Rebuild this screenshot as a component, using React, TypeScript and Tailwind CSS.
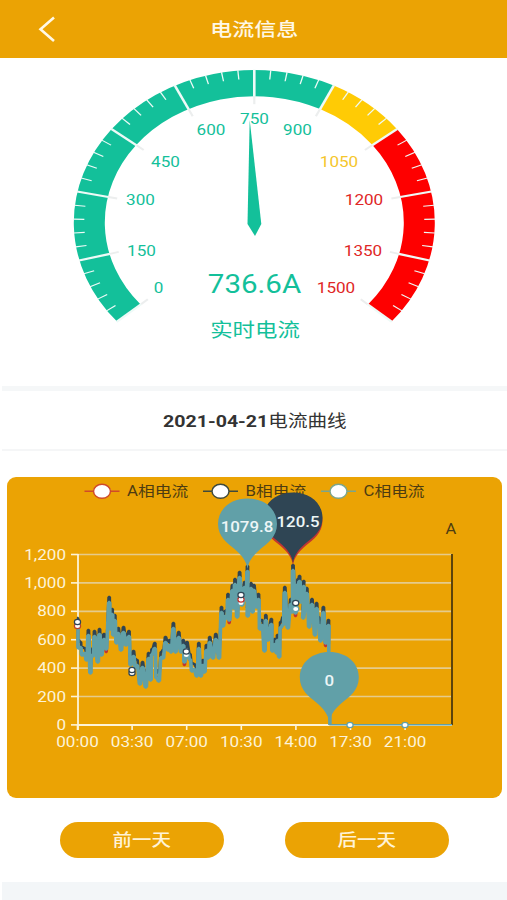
import type { ReactNode } from "react";

const STRETCH = 1.18;

type TextProps = {
  x: number;
  y: number;
  size: number;
  fill: string;
  weight?: number;
  anchor?: "start" | "middle" | "end";
  children: ReactNode;
};

function Label({ x, y, size, fill, weight = 400, anchor = "middle", children }: TextProps) {
  return (
    <text
      transform={`translate(${x} ${y}) scale(${STRETCH} 1)`}
      fontSize={size}
      fontWeight={weight}
      fill={fill}
      textAnchor={anchor}
    >
      {children}
    </text>
  );
}

const GREEN = "#13c09a";
const YELLOW = "#ffcb05";
const RED = "#fe0000";

const gaugeLabels = [
  { text: "0", x: 158.5, y: 235, fill: GREEN },
  { text: "150", x: 141.5, y: 197.5, fill: GREEN },
  { text: "300", x: 140.5, y: 147, fill: GREEN },
  { text: "450", x: 165.5, y: 109, fill: GREEN },
  { text: "600", x: 211, y: 77, fill: GREEN },
  { text: "750", x: 254.5, y: 65.5, fill: GREEN },
  { text: "900", x: 297.5, y: 77, fill: GREEN },
  { text: "1050", x: 339, y: 109, fill: "#f5c62c" },
  { text: "1200", x: 364, y: 147, fill: "#e02626" },
  { text: "1350", x: 363, y: 197.5, fill: "#e02626" },
  { text: "1500", x: 336, y: 235, fill: "#e02626" },
];

// the dial sweeps 261 degrees, from 220.5 down to -40.5
function polar(r: number, fraction: number) {
  const a = ((220.5 - 261 * fraction) * Math.PI) / 180;
  return [r * Math.cos(a), -r * Math.sin(a)];
}

function arc(r: number, from: number, to: number) {
  const [x1, y1] = polar(r, from);
  const [x2, y2] = polar(r, to);
  const large = (to - from) * 261 > 180 ? 1 : 0;
  return `M${x1} ${y1}A${r} ${r} 0 ${large} 1 ${x2} ${y2}`;
}

function Gauge() {
  const ticks = Array.from({ length: 51 }, (_, i) => i);

  return (
    <svg width="507" height="328" viewBox="0 0 507 328" className="block font-['Roboto','Noto_Sans_CJK_SC',sans-serif]">
      <g transform="translate(254.3 164.5) scale(1 0.845)" fill="none">
        <path d={arc(165, 0, 0.6)} stroke={GREEN} strokeWidth="31" />
        <path d={arc(165, 0.6, 0.7)} stroke={YELLOW} strokeWidth="31" />
        <path d={arc(165, 0.7, 1)} stroke={RED} strokeWidth="31" />
        {ticks.map((i) => {
          const major = i % 5 === 0;
          const [x1, y1] = polar(181, i / 50);
          const [x2, y2] = polar(major ? 149 : 170, i / 50);
          const [x3, y3] = polar(140, i / 50);
          return (
            <g key={i}>
              {major && <path d={`M${x2} ${y2}L${x3} ${y3}`} stroke="#eceeee" strokeWidth="2.2" />}
              <path d={`M${x1} ${y1}L${x2} ${y2}`} stroke="#eefaf7" strokeWidth={major ? 2.6 : 1.3} />
            </g>
          );
        })}
      </g>
      {gaugeLabels.map((l) => (
        <Label key={l.text} x={l.x} y={l.y} size={14.5} fill={l.fill}>
          {l.text}
        </Label>
      ))}
      <path d="M249.7 62L261.3 166L255 178L247.5 166Z" fill={GREEN} />
      <Label x={254.5} y={234.5} size={25} fill={GREEN}>736.6A</Label>
      <Label x={255} y={279} size={19} fill={GREEN}>实时电流</Label>
    </svg>
  );
}

const legend = [
  { name: "A相电流", x: 95, color: "#d04a2a" },
  { name: "B相电流", x: 213.5, color: "#3f4a3c" },
  { name: "C相电流", x: 331.5, color: "#7ba58c" },
];

const yLabels = ["1,200", "1,000", "800", "600", "400", "200", "0"];
const xLabels = ["00:00", "03:30", "07:00", "10:30", "14:00", "17:30", "21:00"];

// [x, y] turning points of the curve, peak "p" or valley "v" ("r" is a valley where phase A dips lowest)
const curve: [number, number, string][] = [
  [77.5, 626, "v"], [78.5, 648, "v"], [80.5, 642, "p"], [82, 655, "v"], [84.5, 648, "p"], [86.5, 660, "v"],
  [88.4, 630, "p"], [90.4, 673, "v"], [91.7, 650, "p"], [93, 656, "v"], [94.5, 631, "p"], [97.8, 662, "v"],
  [99.5, 629, "p"], [101.5, 655, "v"], [104, 634, "p"], [106.2, 649, "r"], [109.2, 597, "p"], [110.6, 629, "v"],
  [112.2, 609, "p"], [113.2, 635, "v"], [114.8, 615, "p"], [116.5, 643, "v"], [118.3, 628, "p"], [121, 650, "v"],
  [123.5, 627, "p"], [126, 645, "v"], [129, 631, "p"], [130.6, 665, "v"], [133.5, 651, "p"], [135.5, 667, "v"],
  [137, 660, "p"], [140, 684, "v"], [142.5, 662, "p"], [145.8, 687, "v"], [148.6, 653, "p"], [150.6, 680, "v"],
  [152, 649, "p"], [154.8, 643, "p"], [156.5, 678, "v"], [158.8, 681, "v"], [161.3, 652, "p"], [163, 658, "v"],
  [165.5, 637, "p"], [168, 650, "v"], [169.5, 640, "p"], [171, 652, "v"], [173.4, 623, "p"], [175.5, 652, "v"],
  [178.8, 632, "p"], [181, 652, "v"], [183.3, 640, "p"], [184.4, 662, "r"], [187, 650, "v"], [190, 654, "p"],
  [192, 671, "v"], [194, 664, "p"], [196.8, 676, "v"], [198.8, 643, "p"], [200.8, 676, "v"], [203, 660, "p"],
  [204.5, 672, "v"], [206.4, 645, "p"], [208, 658, "v"], [209.7, 637, "p"], [213, 658, "v"], [215.8, 634, "p"],
  [219, 658, "v"], [221.5, 607, "p"], [223, 626, "v"], [225.2, 611, "p"], [226.6, 618, "v"], [228, 594, "p"],
  [229.2, 620, "r"], [232.5, 585, "p"], [233.8, 608, "v"], [235, 579, "p"], [237.2, 617, "v"], [239.6, 572, "p"],
  [242, 605, "v"], [244.5, 582, "p"], [245.8, 600, "v"], [247.5, 566, "p"], [247.7, 616, "v"], [251, 583, "p"],
  [252.6, 612, "v"], [254, 585, "p"], [256.5, 607, "v"], [258.5, 594, "p"], [260, 629, "v"], [262, 620, "p"],
  [264.5, 651, "v"], [265.8, 615, "p"], [268, 640, "v"], [271.4, 619, "p"], [272.4, 651, "v"], [275, 639, "p"],
  [276.6, 653, "v"], [277.5, 635, "p"], [279.2, 657, "v"], [280.6, 622, "p"], [283, 625, "v"], [284.8, 587, "p"],
  [287.8, 628, "v"], [290.8, 599, "p"], [292, 612, "v"], [293, 565, "p"], [295.5, 613, "r"], [298, 579, "p"],
  [299.6, 576, "p"], [301, 602, "v"], [303.8, 581, "p"], [303.2, 618, "v"], [306.8, 588, "p"], [309.2, 627, "v"],
  [312, 599, "p"], [315, 635, "v"], [316.6, 603, "p"], [318.6, 625, "v"], [320.5, 641, "v"], [323.4, 607, "p"],
  [325.6, 643, "r"], [328.5, 620, "p"], [329.3, 655, "v"],
];

// shift peaks or valleys to get the three phases out of one set of points
function phase(peakShift: number, valleyShift: number, redShift: number) {
  return curve
    .map(([x, y, kind], i) => {
      const yy = y + (kind === "p" ? peakShift : kind === "r" ? redShift : valleyShift);
      return `${i ? "L" : "M"}${x - 0.6} ${yy}H${x + 0.6}`;
    })
    .join("");
}

// teardrop with its tip at the origin
const PIN = "M0 0C-1-8-6-14-13-20C-20-26-29.5-32-29.5-45C-29.5-60-17-70.5 0-70.5S29.5-60 29.5-45C29.5-32 20-26 13-20C6-14 1-8 0 0Z";

type PinProps = { x: number; y: number; fill: string; textX?: number; textY?: number; children?: ReactNode };

function Pin({ x, y, fill, textX = x, textY, children }: PinProps) {
  return (
    <>
      <path d={PIN} transform={`translate(${x} ${y})`} fill={fill} />
      {textY && <Label x={textX} y={textY} size={14.3} weight={500} fill="#edf6f7">{children}</Label>}
    </>
  );
}

const dots = [
  [77.5, 626, "#b9432c"], [77.5, 622, "#2f4554"],
  [132, 673, "#2f4554"], [132, 670, "#2f4554"],
  [186.3, 655, "#61a0a8"], [186.3, 651.5, "#2f4554"],
  [241, 603, "#61a0a8"], [241, 599.5, "#c23531"], [241, 595, "#2f4554"],
  [295.7, 609, "#61a0a8"], [295.7, 603, "#2f4554"],
  [350, 725, "#61a0a8"], [405, 725, "#61a0a8"],
] as const;

function CurrentChart() {
  return (
    <svg width="495" height="321" viewBox="7 477 495 321" className="block font-['Roboto','Noto_Sans_CJK_SC',sans-serif]">
      {legend.map((l) => (
        <g key={l.name}>
          <path d={`M${l.x - 10.5} 491.3h35`} stroke={l.color} strokeWidth="1.6" />
          <ellipse cx={l.x + 7} cy="491.3" rx="8.5" ry="7" fill="#fff" stroke={l.color} strokeWidth="1.5" />
          <Label x={l.x + 32} y={495.5} size={14.2} fill="#4d3c12" anchor="start">{l.name}</Label>
        </g>
      ))}
      <Label x={451} y={534} size={14} fill="#4d3c12">A</Label>

      {yLabels.map((t, i) => (
        <g key={t}>
          {i < 6 && <path d={`M78 ${554.5 + i * 28.4}H452`} stroke="#e5cb8c" strokeWidth="1.7" />}
          <path d={`M71 ${554.5 + i * 28.4}h7`} stroke="#fdf3d8" strokeWidth="1.6" />
          <Label x={66} y={559.5 + i * 28.4} size={14.5} fill="#fdf3d8" anchor="end">{t}</Label>
        </g>
      ))}
      <path d="M78 554V730M78 725H452" stroke="#fdf3d8" strokeWidth="1.8" />
      {xLabels.map((t, i) => (
        <g key={t}>
          <path d={`M${77.5 + i * 54.6} 725v5`} stroke="#fdf3d8" strokeWidth="1.6" />
          <Label x={77.5 + i * 54.6} y={746.5} size={14.5} fill="#fdf3d8">{t}</Label>
        </g>
      ))}
      <path d="M452 554V725" stroke="#5c430c" strokeWidth="2" />

      <g fill="none" strokeLinejoin="bevel">
        <path d={phase(6, -1, 3)} stroke="#c23531" strokeWidth="2.4" />
        <path d={phase(0, -8, -9)} stroke="#2f4554" strokeWidth="2.6" />
        <path d={`${phase(5.5, 0, 0)}V725`} stroke="#61a0a8" strokeWidth="3.6" />
        <path d="M329.3 724.7H452" stroke="#61a0a8" strokeWidth="1.6" />
      </g>
      {dots.map(([x, y, color]) => (
        <ellipse key={`${x}-${y}`} cx={x} cy={y} rx="3.1" ry="2.7" fill="#fff" stroke={color} strokeWidth="1.2" />
      ))}

      <Pin x={293} y={565.5} fill="#c23531" />
      <Pin x={293} y={563} fill="#2f4554" textX={298} textY={526.5}>120.5</Pin>
      <Pin x={247.5} y={569} fill="#61a0a8" textX={247} textY={532}>1079.8</Pin>
      <Pin x={329.3} y={722.5} fill="#61a0a8" textY={686}>0</Pin>
    </svg>
  );
}

export default function App() {
  return (
    <div className="flex h-[900px] w-[507px] flex-col overflow-hidden bg-white font-['Roboto','Noto_Sans_CJK_SC',sans-serif]">
      <header className="grid h-[58px] shrink-0 grid-cols-[1fr_auto_1fr] items-center bg-[#eba304] text-white">
        <button className="ml-[38px] w-5" aria-label="返回">
          <svg width="18" height="26" viewBox="0 0 18 26" fill="none" stroke="#fff8e6" strokeWidth="2.6">
            <path d="M16 1.5L2.5 13.2L16 25" />
          </svg>
        </button>
        <h1 className="mt-0.5 ml-0.5 scale-x-[1.18] text-[18.6px] leading-none font-medium text-[#fff8e6]">电流信息</h1>
      </header>

      <section className="h-[328px] shrink-0">
        <Gauge />
      </section>

      <div className="ml-0.5 h-[5px] shrink-0 bg-[#f5f7f8]" />
      <div className="ml-0.5 flex h-[60px] shrink-0 items-center justify-center border-b-2 border-[#f5f6f7] pt-1">
        <h2 className="scale-x-[1.18] text-[16.6px] leading-none text-[#333]">
          <b>2021-04-21</b>电流曲线
        </h2>
      </div>

      <section className="mt-[26px] ml-[7px] h-[321px] w-[495px] shrink-0 overflow-hidden rounded-[9px] bg-[#eba304]">
        <CurrentChart />
      </section>

      <div className="mt-6 ml-[60px] flex shrink-0 gap-[61px]">
        <button className="flex h-9 w-[164px] items-center justify-center rounded-full bg-[#eba304] pt-0.5 text-[#fff3d6]">
          <span className="scale-x-[1.18] text-[16.5px] leading-none font-medium">前一天</span>
        </button>
        <button className="flex h-9 w-[164px] items-center justify-center rounded-full bg-[#eba304] pt-0.5 text-[#fff3d6]">
          <span className="scale-x-[1.18] text-[16.5px] leading-none font-medium">后一天</span>
        </button>
      </div>

      <footer className="mt-6 ml-0.5 grow bg-[#f3f6f8]" />
    </div>
  );
}
